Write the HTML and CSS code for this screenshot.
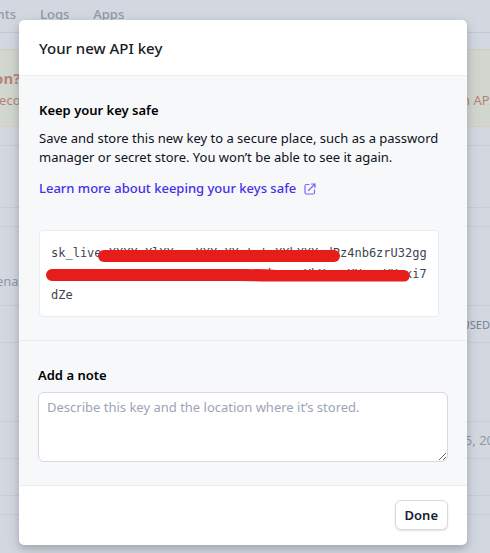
FILE: index.html
```
<!DOCTYPE html>
<html lang="en">
<head>
<meta charset="utf-8">
<meta name="viewport" content="width=device-width, initial-scale=1">
<title>Your new API key</title>
<link rel="stylesheet" href="styles.css">
</head>
<body>
<div class="page">
  <nav class="nav"><a href="#">Events</a><a href="#">Logs</a><a href="#">Apps</a></nav>
  <section class="banner">
    <strong class="banner-start">on?</strong>
    <div class="banner-row"><span>reco</span><span>n API</span></div>
  </section>
  <div class="row gap-s"></div>
  <div class="row gap-l"></div>
  <div class="row gap-s"></div>
  <div class="row gap-xl"><span class="enable">enable</span></div>
  <div class="row gap-m head"><span>LAST USED</span></div>
  <div class="row gap-xl"></div>
  <div class="row gap-m date"><span>May 15, 20</span></div>
  <div class="row gap-m"></div>
  <div class="row gap-s"></div>
</div>

<div class="overlay">
  <div class="modal" role="dialog" aria-labelledby="title">
    <header class="modal-head"><h1 id="title">Your new API key</h1></header>
    <section class="section safe">
      <h2>Keep your key safe</h2>
      <p>Save and store this new key to a secure place, such as a password manager or secret store. You won’t be able to see it again.</p>
      <a class="learn" href="#">Learn more about keeping your keys safe
        <svg width="12" height="12" viewBox="0 0 12 12" fill="none" stroke="currentColor" stroke-width="1.2" stroke-linecap="round" stroke-linejoin="round" aria-hidden="true"><path d="M5 1.500H2.500Q1 1.500 1 3V9.500Q1 11 2.500 11H9Q10.500 11 10.500 9.500V7M7.500 1H11V4.500M11 1L4.500 7.500"/></svg>
      </a>
      <div class="key">
        <code>sk_live_XXXXxXlXXxxxXXXxXXxtxtxXXbXXXxdPz4nb6zrU32gg<br>xxxxxxxxxxxxxxxxxxxxxxxxxxxxxxbxxxxXbXxxxXXxxxXXxxi7<br>dZe</code>
        <svg class="redact" viewBox="0 0 400 87" fill="#e71d1c" aria-hidden="true">
          <path d="M65 20H295A6 6 0 0 1 295 32H65A6 6 0 0 1 65 20Z"/>
          <path d="M13 39H205Q222 39 238 40H365A5.800 5.800 0 0 1 365 51.600H230Q215 51 200 51H13A6 6 0 0 1 13 39Z"/>
        </svg>
      </div>
    </section>
    <section class="section note">
      <label for="note">Add a note</label>
      <textarea id="note" placeholder="Describe this key and the location where it’s stored."></textarea>
    </section>
    <footer class="modal-foot"><button type="button">Done</button></footer>
  </div>
</div>
</body>
</html>
```
FILE: styles.css
```
* { box-sizing: border-box; }
html, body { height: 100%; }
body {
  margin: 0;
  overflow: hidden;
  background: #d3d8e0;
  color: #1a1b25;
  font: 13px/19px "Noto Sans", "Open Sans", sans-serif;
}
h1, h2, p { margin: 0; }

.page { color: #8f98a6; }
.nav {
  display: flex;
  gap: 24px;
  height: 33px;
  padding-top: 5px;
  margin-left: -25px;
  border-bottom: 1px solid #bdcad7;
  font-weight: 500;
}
.nav a { color: inherit; text-decoration: none; }
.banner {
  height: 78px;
  margin-top: 16px;
  padding-top: 19px;
  border-top: 1px solid #d2cdbd;
  border-bottom: 1px solid #dccfb4;
  background: #d1d7cf;
  color: #b98279;
}
.banner-start { display: block; margin-left: -6px; font-size: 15px; }
.banner-row { display: flex; justify-content: space-between; margin: 3px -4px 0 -6px; }
.row { border-bottom: 1px solid #c5ced9; }
.gap-s { height: 19px; }
.gap-m { height: 37px; }
.gap-l { height: 62px; }
.gap-xl { height: 79px; }
.enable { display: block; padding-top: 45px; margin-left: -4px; }
.head, .date { display: flex; align-items: center; justify-content: flex-end; }
.head { font-size: 11px; color: #788292; }
.date { margin-right: -4px; }

.overlay {
  position: absolute;
  inset: 0;
  padding: 20px 23px 8px 19px;
}
.modal {
  max-width: 640px;
  margin: 0 auto;
  overflow: hidden;
  border-radius: 5px;
  background: #fff;
  box-shadow: 0 5px 14px rgba(60, 66, 87, .2), 0 3px 6px rgba(0, 0, 0, .12);
}
.modal-head { padding: 18px 20px 17px; }
h1 { font-size: 15px; line-height: 20px; font-weight: 500; }
.section {
  padding: 24px 19px 23px;
  border-top: 1px solid #e9ecf0;
  background: #f6f8fa;
}
.safe { padding-left: 20px; color: #10111a; }
h2, label { display: block; font-size: 13px; line-height: 20px; font-weight: 600; color: #000; }
.safe p { margin: 9px 0 12px; }
.learn {
  display: inline-flex;
  align-items: center;
  gap: 8px;
  color: #4430e8;
  font-weight: 500;
  text-decoration: none;
}
.learn svg { color: #7a65f5; }
.key {
  position: relative;
  margin: 32px 9px 0 0;
  padding: 12px 11px 10px;
  border: 1px solid #e8edf2;
  border-radius: 4px;
  background: #fff;
}
code {
  display: block;
  color: #414552;
  font: 12px/21px "DejaVu Sans Mono", monospace;
  white-space: nowrap;
}
.redact { position: absolute; inset: -1px; width: calc(100% + 2px); overflow: visible; }
.note label { margin-bottom: 7px; }
textarea {
  display: block;
  width: 100%;
  height: 70px;
  padding: 5px 8px;
  border: 1px solid #d5d9e0;
  border-radius: 6px;
  background: #fff;
  color: inherit;
  font: inherit;
  resize: vertical;
}
textarea::placeholder { color: #9ca4b5; }
.modal-foot {
  display: flex;
  justify-content: flex-end;
  padding: 14px 19px 15px;
  border-top: 1px solid #e9ecf0;
}
button {
  padding: 4px 9px;
  border: 1px solid #d5d9e0;
  border-radius: 6px;
  background: #fff;
  box-shadow: 0 1px 2px rgba(0, 0, 0, .12);
  color: #1a1b35;
  font: 600 13px/20px "Noto Sans", sans-serif;
}
```
